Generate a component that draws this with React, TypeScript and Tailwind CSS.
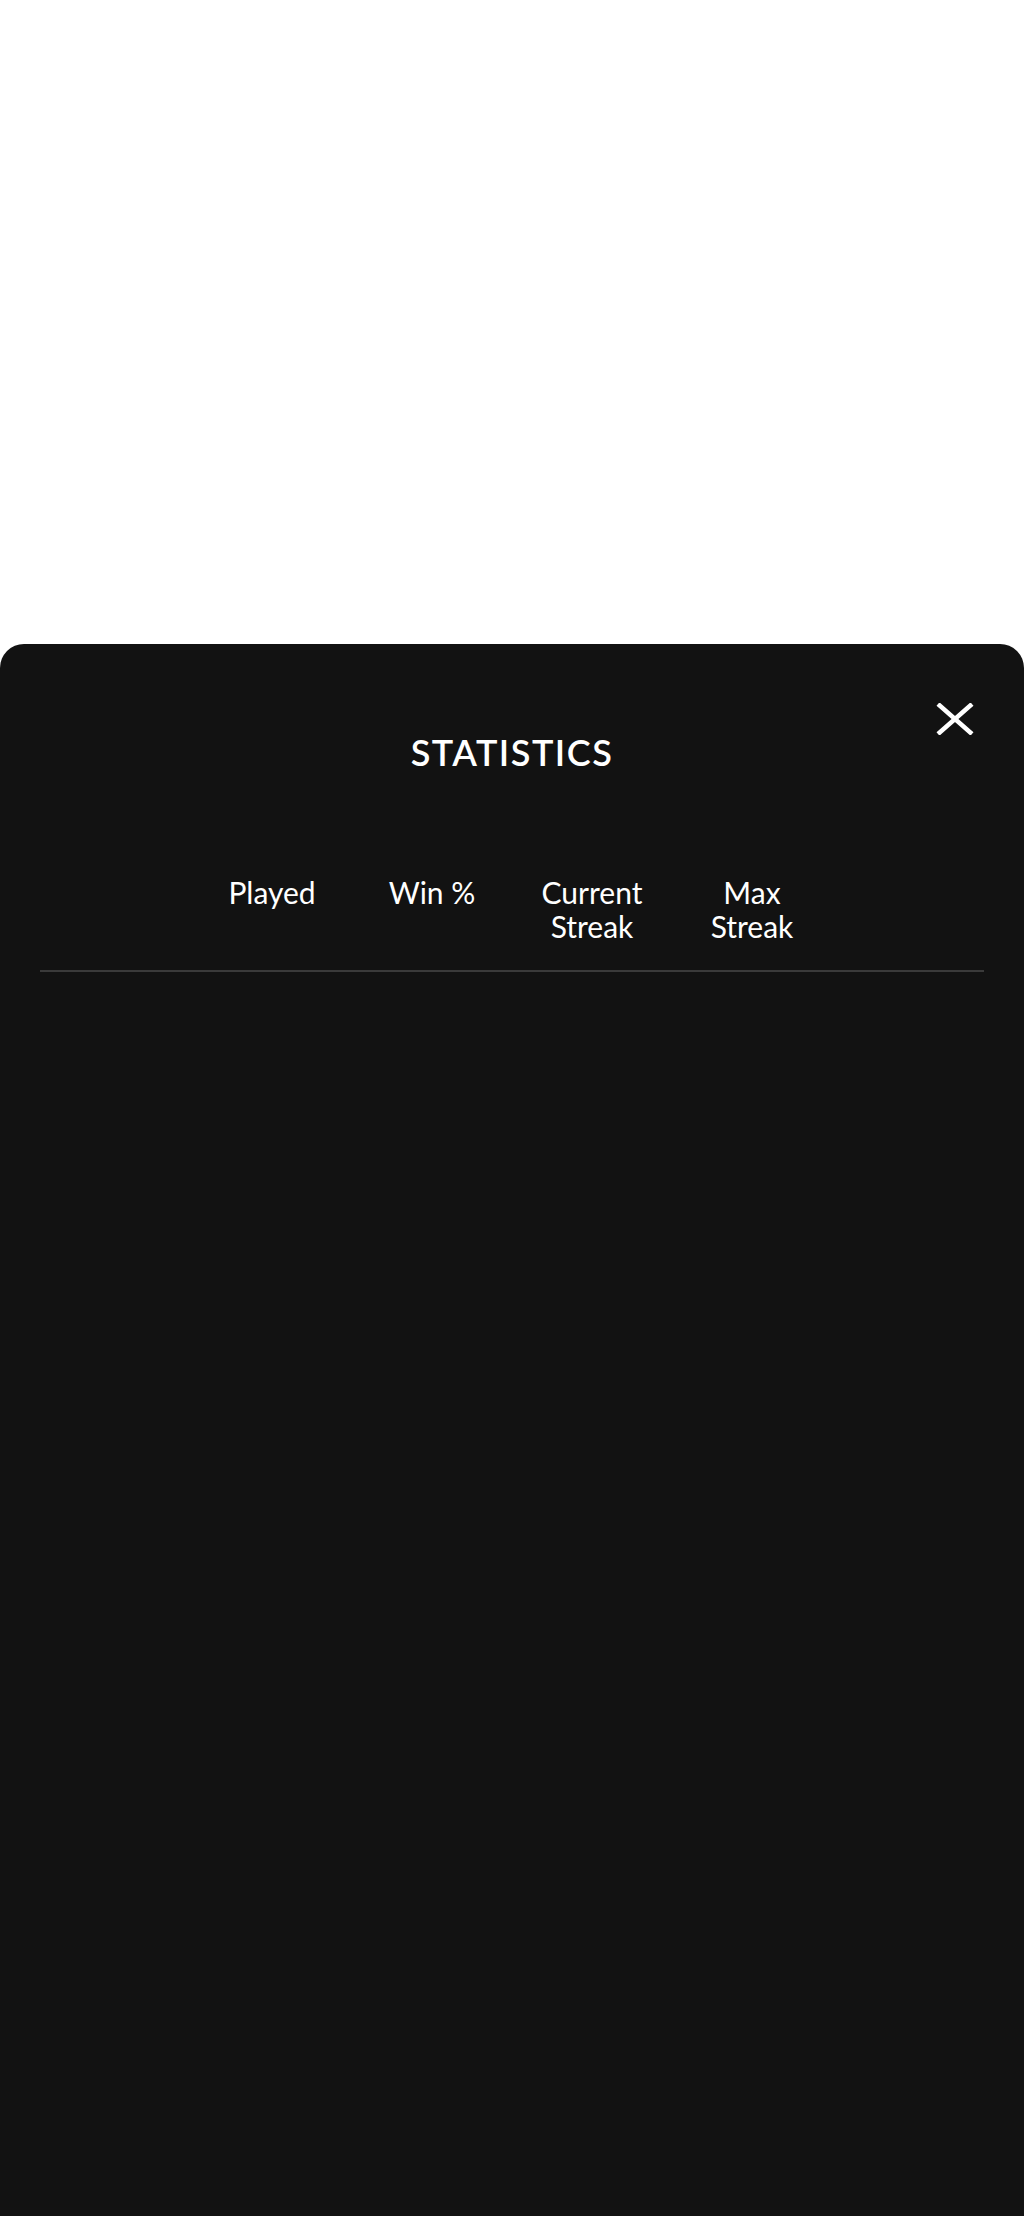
import React from 'react';

const stats = [
  { label: 'Played' },
  { label: 'Win %' },
  { label: 'Current Streak' },
  { label: 'Max Streak' },
];

const CloseIcon: React.FC = () => (
  <svg width="38" height="32" viewBox="0 0 38 32" fill="none" aria-hidden="true">
    <path d="M2 1 L36 31 M36 1 L2 31" stroke="white" strokeWidth="4.5" />
  </svg>
);

export default function App() {
  return (
    <div className="min-h-[2216px] w-full flex flex-col bg-white font-['Lato','Noto_Sans',sans-serif]">
      {/* --- EMPTY PAGE ABOVE THE SHEET --- */}
      <div className="h-[644px] shrink-0"></div>

      {/* --- STATS SHEET --- */}
      <section className="flex-1 bg-[#121212] rounded-t-3xl text-white">
        <header className="grid grid-cols-[1fr_auto_1fr] items-start pt-[59px]">
          <div></div>
          <h2 className="mt-[28px] text-[36px] leading-[42px] font-semibold tracking-[1.5px]">STATISTICS</h2>
          <button className="justify-self-end mr-[50px] cursor-pointer">
            <CloseIcon />
          </button>
        </header>

        <div className="mt-[102px] flex justify-center">
          {stats.map((s) => (
            <div key={s.label} className="w-[160px] px-4 text-center text-[30px] leading-[34px]">
              {s.label}
            </div>
          ))}
        </div>

        <div className="mx-10 mt-[27px] h-[2px] bg-[#3a3a3a]"></div>
      </section>
    </div>
  );
}
